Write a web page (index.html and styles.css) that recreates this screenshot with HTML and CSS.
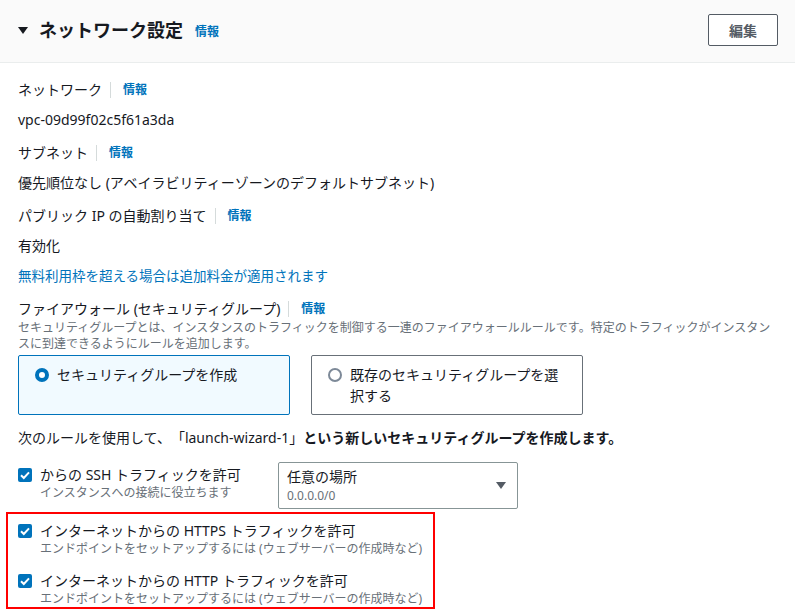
FILE: index.html
```html
<!DOCTYPE html>
<html lang="ja">
<head>
    <meta charset="UTF-8">
    <meta name="viewport" content="width=device-width, initial-scale=1.0">
    <title>ネットワーク設定</title>
    <link rel="stylesheet" href="styles.css">
</head>
<body>
    <div class="panel">
        <div class="panel-header">
            <div class="panel-title">
                <span class="caret"></span>
                <h2>ネットワーク設定</h2>
                <a class="info title-info">情報</a>
            </div>
            <button class="btn">編集</button>
        </div>

        <div class="panel-body">
            <div class="field">
                <div class="field-label">ネットワーク<span class="sep"></span><a class="info">情報</a></div>
                <div class="field-value">vpc-09d99f02c5f61a3da</div>
            </div>

            <div class="field">
                <div class="field-label">サブネット<span class="sep"></span><a class="info">情報</a></div>
                <div class="field-value">優先順位なし (アベイラビリティーゾーンのデフォルトサブネット)</div>
            </div>

            <div class="field">
                <div class="field-label">パブリック IP の自動割り当て<span class="sep"></span><a class="info">情報</a></div>
                <div class="field-value">有効化</div>
                <div class="field-value link">無料利用枠を超える場合は追加料金が適用されます</div>
            </div>

            <div class="field">
                <div class="field-label">ファイアウォール (セキュリティグループ)<span class="sep"></span><a class="info">情報</a></div>
                <div class="field-desc">セキュリティグループとは、インスタンスのトラフィックを制御する一連のファイアウォールルールです。特定のトラフィックがインスタンスに到達できるようにルールを追加します。</div>

                <div class="tiles">
                    <div class="tile selected">
                        <span class="radio"></span>
                        <span class="tile-text">セキュリティグループを作成</span>
                    </div>
                    <div class="tile">
                        <span class="radio"></span>
                        <span class="tile-text">既存のセキュリティグループを選択する</span>
                    </div>
                </div>

                <p class="rules-note">次のルールを使用して、「launch-wizard-1」<b>という新しいセキュリティグループを作成します。</b></p>

                <div class="rule-row">
                    <div class="check-item">
                        <span class="checkbox">
                            <svg viewBox="0 0 14 14" width="14" height="14"><path d="M3 7.2l2.8 2.8L11 4.4" fill="none" stroke="#fff" stroke-width="2"/></svg>
                        </span>
                        <div>
                            <div class="check-label">からの SSH トラフィックを許可</div>
                            <div class="check-desc">インスタンスへの接続に役立ちます</div>
                        </div>
                    </div>
                    <div class="select">
                        <div>
                            <div class="select-value">任意の場所</div>
                            <div class="select-sub">0.0.0.0/0</div>
                        </div>
                        <span class="select-caret"></span>
                    </div>
                </div>

                <div class="highlight">
                    <div class="check-item">
                        <span class="checkbox">
                            <svg viewBox="0 0 14 14" width="14" height="14"><path d="M3 7.2l2.8 2.8L11 4.4" fill="none" stroke="#fff" stroke-width="2"/></svg>
                        </span>
                        <div>
                            <div class="check-label">インターネットからの HTTPS トラフィックを許可</div>
                            <div class="check-desc">エンドポイントをセットアップするには (ウェブサーバーの作成時など)</div>
                        </div>
                    </div>
                    <div class="check-item">
                        <span class="checkbox">
                            <svg viewBox="0 0 14 14" width="14" height="14"><path d="M3 7.2l2.8 2.8L11 4.4" fill="none" stroke="#fff" stroke-width="2"/></svg>
                        </span>
                        <div>
                            <div class="check-label">インターネットからの HTTP トラフィックを許可</div>
                            <div class="check-desc">エンドポイントをセットアップするには (ウェブサーバーの作成時など)</div>
                        </div>
                    </div>
                </div>
            </div>
        </div>
    </div>
</body>
</html>
```

FILE: styles.css
```css
body {
	font-family: "Noto Sans", "Noto Sans CJK JP", sans-serif;
	font-size: 14px;
	color: #16191f;
	background: #fff;
	margin: 0;
	text-spacing-trim: space-all;
}

.panel {
	width: 795px;
	height: 610px;
	overflow: hidden;
}

.panel-header {
	display: flex;
	justify-content: space-between;
	align-items: center;
	padding: 14px 17px 16px 18px;
	background: #fafafa;
	border-bottom: 1px solid #eaeded;
}

.panel-title {
	display: flex;
	align-items: center;
}

.caret {
	width: 0;
	height: 0;
	border-left: 5px solid transparent;
	border-right: 5px solid transparent;
	border-top: 7px solid #16191f;
	margin-right: 11px;
}

.panel-title h2 {
	margin: 0;
	font-size: 18px;
	font-weight: 700;
	line-height: 32px;
}

.info {
	color: #0073bb;
	font-size: 12px;
	font-weight: 700;
	cursor: pointer;
}

.title-info {
	margin-left: 12px;
	margin-top: 2px;
}

.btn {
	width: 70px;
	height: 32px;
	background: #fff;
	border: 1px solid #545b64;
	border-radius: 2px;
	color: #545b64;
	font-family: inherit;
	font-size: 14px;
	font-weight: 700;
	padding: 0;
	cursor: pointer;
}

.panel-body {
	padding: 16px 18px 0 18px;
}

.field {
	margin-bottom: 11px;
}

.field-label {
	display: flex;
	align-items: center;
	line-height: 22px;
}

.sep {
	width: 1px;
	height: 16px;
	background: #d5dbdb;
	margin: 0 12px 0 8px;
}

.field-value {
	line-height: 22px;
	margin-top: 8px;
}

.field-value.link {
	color: #0073bb;
	font-size: 13.5px;
}

.field-desc {
	color: #687078;
	font-size: 12px;
	line-height: 16px;
}

.tiles {
	display: grid;
	grid-template-columns: 272px 272px;
	column-gap: 21px;
	margin-top: 3px;
}

.tile {
	display: flex;
	align-items: flex-start;
	border: 1px solid #687078;
	border-radius: 2px;
	padding: 8px 16px;
	line-height: 21px;
}

.tile.selected {
	background: #f1faff;
	border-color: #0073bb;
}

.radio {
	flex: none;
	box-sizing: border-box;
	width: 14px;
	height: 14px;
	border-radius: 50%;
	border: 2px solid #7d8998;
	background: #fff;
	margin: 4px 8px 0 0;
}

.tile.selected .radio {
	border: 4px solid #0073bb;
}

.rules-note {
	margin: 12px 0 13px 0;
	line-height: 22px;
}

.rule-row {
	display: flex;
	align-items: flex-start;
}

.rule-row .check-item {
	width: 260px;
	margin-top: 3px;
}

.check-item {
	display: flex;
	align-items: flex-start;
}

.checkbox {
	flex: none;
	width: 14px;
	height: 14px;
	border-radius: 2px;
	background: #0073bb;
	margin: 3px 8px 0 0;
}

.checkbox svg {
	display: block;
}

.check-label {
	line-height: 20px;
}

.check-desc {
	color: #687078;
	font-size: 12px;
	line-height: 16px;
}

.select {
	box-sizing: border-box;
	width: 240px;
	height: 47px;
	display: flex;
	justify-content: space-between;
	align-items: center;
	border: 1px solid #879596;
	border-radius: 2px;
	padding: 0 11px 0 8px;
}

.select-value {
	line-height: 20px;
}

.select-sub {
	color: #687078;
	font-size: 12px;
	line-height: 18px;
}

.select-caret {
	width: 0;
	height: 0;
	border-left: 5px solid transparent;
	border-right: 5px solid transparent;
	border-top: 7px solid #545b64;
}

.highlight {
	box-sizing: border-box;
	width: 429px;
	margin: 3px 0 0 -12px;
	padding: 7px 0 0 10px;
	border: 2px solid #ff0000;
	display: flex;
	flex-direction: column;
	gap: 14px;
}
```
